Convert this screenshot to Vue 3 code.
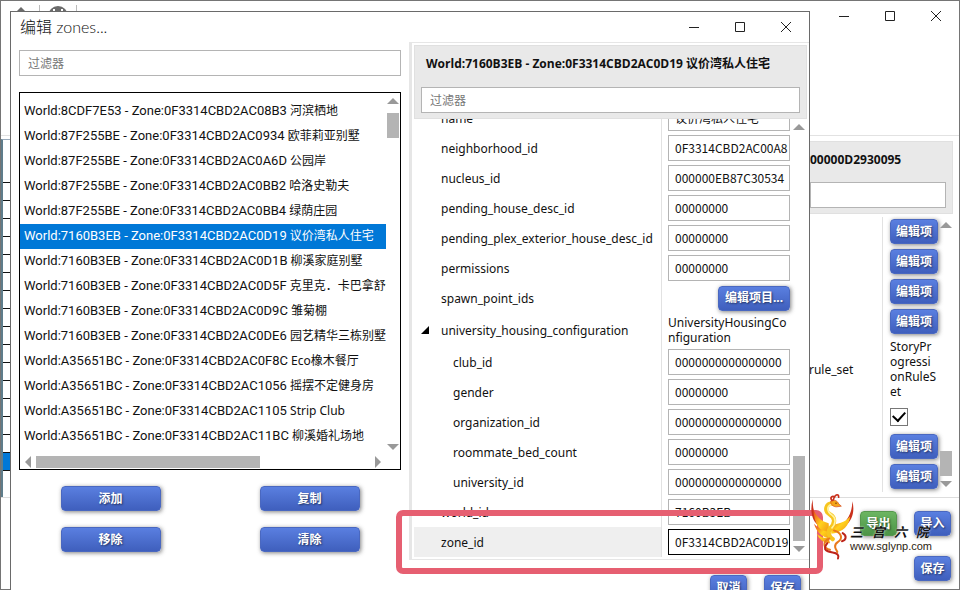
<template>
  <div class="desktop">
    <main class="window">
      <header class="window-bar">
        <div class="toolbar">
          <svg class="tool-icon" viewBox="0 0 24 24"><path d="M12 2l8 8h-4v9H8v-9H4z" /></svg>
          <i class="tool-line"></i>
          <svg class="tool-icon" viewBox="0 0 24 24">
            <circle cx="12" cy="11" r="10" />
            <path class="tool-cut" d="M8 4v8M16 4v8M8 9h8" />
          </svg>
          <i class="tool-line"></i>
        </div>
        <div class="controls">
          <button v-for="c in controls" :key="c.name" :aria-label="c.name">
            <svg viewBox="0 0 12 12"><path :d="c.path" /></svg>
          </button>
        </div>
      </header>

      <section class="workspace">
        <ul class="tree">
          <li v-for="n in 17" :key="n" :class="{ first: n === 1, picked: n === 17 }"></li>
        </ul>
        <div class="details">
          <div class="panel-head">
            <h2>00000D2930095</h2>
            <input type="text" aria-label="details filter" />
          </div>
          <div class="details-body">
            <div class="details-rows">
              <div v-for="(row, i) in backRows" :key="i" class="details-row">
                <span class="details-label">{{ row.label }}</span>
                <div class="details-value">
                  <button v-if="row.type === 'button'" class="btn btn-narrow">编辑项</button>
                  <input v-else-if="row.type === 'check'" type="checkbox" class="check" aria-label="enabled" checked />
                  <span v-else class="break-text">{{ row.value }}</span>
                </div>
              </div>
            </div>
            <div class="scroll-y low">
              <i class="arrow up"></i>
              <i class="thumb short"></i>
              <i class="arrow down"></i>
            </div>
          </div>
        </div>
      </section>

      <footer class="window-footer">
        <button class="btn btn-green">导出</button>
        <button class="btn">导入</button>
        <button class="btn last">保存</button>
      </footer>
    </main>

    <section class="dialog" role="dialog" aria-labelledby="dialog-title">
      <header class="dialog-bar">
        <h1 id="dialog-title">编辑 zones...</h1>
        <div class="controls">
          <button v-for="c in controls" :key="c.name" :aria-label="c.name">
            <svg viewBox="0 0 12 12"><path :d="c.path" /></svg>
          </button>
        </div>
      </header>

      <div class="dialog-body">
        <div class="zones">
          <input v-model="zoneFilter" class="filter" type="text" placeholder="过滤器" aria-label="过滤器" />
          <div class="list-box">
            <div class="list-main">
              <ul class="zone-list">
                <li
                  v-for="zone in zones"
                  :key="zone.id"
                  :class="{ selected: zone.id === selected.id }"
                  @click="selected = zone"
                ><span class="zone-key">{{ zone.id }}</span> {{ zone.name }}</li>
              </ul>
              <div class="scroll-y">
                <i class="arrow up"></i>
                <i class="thumb short"></i>
                <i class="arrow down"></i>
              </div>
            </div>
            <div class="scroll-x">
              <i class="arrow left"></i>
              <i class="thumb"></i>
              <i class="arrow right"></i>
            </div>
          </div>
          <div class="actions">
            <button v-for="a in actions" :key="a" class="btn">{{ a }}</button>
          </div>
        </div>

        <div class="props">
          <div class="panel-head">
            <h2>{{ selected.id }} {{ selected.name }}</h2>
            <input v-model="propFilter" class="filter" type="text" placeholder="过滤器" aria-label="过滤器" />
          </div>
          <div class="props-body">
            <div class="props-rows">
              <div
                v-for="p in properties"
                :key="p.name"
                class="prop"
                :class="{ group: p.type === 'group', child: p.child, active: p.name === 'zone_id' }"
              >
                <label :for="p.name">
                  <svg v-if="p.type === 'group'" class="expander" viewBox="0 0 8 8"><path d="M8 0v8H0z" /></svg>
                  {{ p.name }}
                </label>
                <div class="prop-value">
                  <button v-if="p.type === 'button'" :id="p.name" class="btn btn-wide">编辑项目...</button>
                  <span v-else-if="p.type === 'group'" :id="p.name" class="break-text">{{ p.value }}</span>
                  <input v-else :id="p.name" v-model="p.value" type="text" />
                </div>
              </div>
            </div>
            <div class="scroll-y low">
              <i class="arrow up"></i>
              <i class="thumb"></i>
              <i class="arrow down"></i>
            </div>
          </div>
        </div>
      </div>

      <footer class="dialog-footer">
        <button class="btn">取消</button>
        <button class="btn">保存</button>
      </footer>
    </section>

    <div class="highlight"></div>

    <div class="brand">
      <svg class="phoenix" viewBox="0 0 135 200">
        <defs>
          <linearGradient id="fire" x1="0" y1="0" x2="1" y2="1">
            <stop offset="0" stop-color="#e8431a" />
            <stop offset="0.5" stop-color="#ffd21c" />
            <stop offset="1" stop-color="#f08a14" />
          </linearGradient>
        </defs>
        <path fill="#c9301c" d="M8 18C0 50 4 78 22 94l18 6C18 80 8 56 8 18z" />
        <path fill="#c9301c" d="M127 24c8 30 0 58-20 72l-22 8c26-18 42-44 42-80z" />
        <path fill="url(#fire)" d="M10 48c8 20 22 36 46 42l2 38C34 118 12 96 10 48z" />
        <path fill="url(#fire)" d="M62 96c20-4 42-6 58-26-2 28-20 46-56 52z" />
        <path fill="url(#fire)" d="M12 92c14 14 26 22 44 24l2 20c-22-4-38-18-46-44zM20 122c12 10 24 14 36 12l4 16c-18 0-32-10-40-28z" />
        <path fill="none" stroke="#f7c51e" stroke-width="13" stroke-linecap="round" d="M72 32c-26-4-30 22-12 32s14 28 2 40-4 28 6 34" />
        <path fill="none" stroke="#fff3a0" stroke-width="5" stroke-linecap="round" d="M64 34c-16 6-12 22 2 32s10 28 0 38" />
        <path fill="#f4a51a" stroke="#d5451a" stroke-width="2" d="M62 24c10-6 20-2 24 8l8 7-14 2c-10 0-18-6-18-17z" />
        <path fill="none" stroke="#c9301c" stroke-width="5" stroke-linecap="round" d="M66 22c-8-10 2-16 8-10M70 20c2-14 16-22 16-8" />
        <path fill="none" stroke="#e9791c" stroke-width="6" stroke-linecap="round" d="M58 136c-22 10-18 30 2 34M72 112c22 6 28 24 12 34s-6 24-2 30" />
        <path fill="none" stroke="#bd241a" stroke-width="6" stroke-linecap="round" d="M52 150c-18 22 2 26 16 28s20 8 16 18M98 120c14 8 10 22-2 24" />
        <circle cx="78" cy="30" r="2" fill="#531b08" />
      </svg>
      <div class="brand-text">
        <div class="brand-name"><span v-for="ch in '三宫六院'" :key="ch">{{ ch }}</span></div>
        <div class="brand-url">www.sglynp.com</div>
      </div>
    </div>
  </div>
</template>

<script setup>
import { ref } from 'vue';

const controls = [
  { name: 'minimize', path: 'M1 6.500h10' },
  { name: 'maximize', path: 'M1.500 1.500h9v9h-9z' },
  { name: 'close', path: 'M1 1l10 10M11 1L1 11' },
];

const zones = [
  { id: 'World:8CDF7E53 - Zone:0F3314CBD2AC08B3', name: '河滨栖地' },
  { id: 'World:87F255BE - Zone:0F3314CBD2AC0934', name: '欧菲莉亚别墅' },
  { id: 'World:87F255BE - Zone:0F3314CBD2AC0A6D', name: '公园岸' },
  { id: 'World:87F255BE - Zone:0F3314CBD2AC0BB2', name: '哈洛史勒夫' },
  { id: 'World:87F255BE - Zone:0F3314CBD2AC0BB4', name: '绿荫庄园' },
  { id: 'World:7160B3EB - Zone:0F3314CBD2AC0D19', name: '议价湾私人住宅' },
  { id: 'World:7160B3EB - Zone:0F3314CBD2AC0D1B', name: '柳溪家庭别墅' },
  { id: 'World:7160B3EB - Zone:0F3314CBD2AC0D5F', name: '克里克．卡巴拿舒适' },
  { id: 'World:7160B3EB - Zone:0F3314CBD2AC0D9C', name: '雏菊棚' },
  { id: 'World:7160B3EB - Zone:0F3314CBD2AC0DE6', name: '园艺精华三栋别墅' },
  { id: 'World:A35651BC - Zone:0F3314CBD2AC0F8C', name: 'Eco橡木餐厅' },
  { id: 'World:A35651BC - Zone:0F3314CBD2AC1056', name: '摇摆不定健身房' },
  { id: 'World:A35651BC - Zone:0F3314CBD2AC1105', name: 'Strip Club' },
  { id: 'World:A35651BC - Zone:0F3314CBD2AC11BC', name: '柳溪婚礼场地' },
];

const selected = ref(zones[5]);
const zoneFilter = ref('');
const propFilter = ref('');

const actions = ['添加', '复制', '移除', '清除'];

const properties = ref([
  { name: 'name', value: '议价湾私人住宅' },
  { name: 'neighborhood_id', value: '0F3314CBD2AC00A8' },
  { name: 'nucleus_id', value: '000000EB87C30534' },
  { name: 'pending_house_desc_id', value: '00000000' },
  { name: 'pending_plex_exterior_house_desc_id', value: '00000000' },
  { name: 'permissions', value: '00000000' },
  { name: 'spawn_point_ids', type: 'button' },
  { name: 'university_housing_configuration', type: 'group', value: 'UniversityHousingConfiguration' },
  { name: 'club_id', value: '0000000000000000', child: true },
  { name: 'gender', value: '00000000', child: true },
  { name: 'organization_id', value: '0000000000000000', child: true },
  { name: 'roommate_bed_count', value: '00000000', child: true },
  { name: 'university_id', value: '0000000000000000', child: true },
  { name: 'world_id', value: '7160B3EB' },
  { name: 'zone_id', value: '0F3314CBD2AC0D19' },
]);

const backRows = [
  { type: 'button' },
  { type: 'button' },
  { type: 'button' },
  { type: 'button' },
  { type: 'text', label: 'rule_set', value: 'StoryProgressionRuleSet' },
  { type: 'check' },
  { type: 'button' },
  { type: 'button' },
];
</script>

<style>
html,
body {
  overflow: hidden;
}
</style>

<style scoped>
.desktop {
  position: relative;
  height: 100vh;
  overflow: hidden;
  background: #fff;
  color: #111;
  font-family: "Noto Sans", "Noto Sans CJK SC", sans-serif;
  font-size: 12px;
  line-height: 15px;
}

.desktop * {
  box-sizing: border-box;
}

h1,
h2,
ul {
  margin: 0;
  padding: 0;
  list-style: none;
}

input,
button {
  font: inherit;
  color: inherit;
}

input[type='text'] {
  width: 100%;
  height: 26px;
  padding: 0 0 2px 6px;
  border: 1px solid #b4b4b4;
  border-radius: 0;
  background: #fff;
  font-family: "Noto Sans CJK SC", sans-serif;
  outline: none;
}

input.filter[type='text'] {
  padding: 0 8px 2px;
}

input::placeholder {
  color: #777;
  opacity: 1;
}

.window {
  display: flex;
  flex-direction: column;
  height: 100%;
  border: 1px solid #757575;
}

.window-bar {
  display: flex;
  justify-content: space-between;
  height: 134px;
}

.toolbar {
  display: flex;
  gap: 6px;
  padding: 4px 8px;
}

.tool-icon {
  width: 24px;
  height: 24px;
  fill: #6b6b6b;
}

.tool-cut {
  fill: none;
  stroke: #fff;
  stroke-width: 2;
}

.tool-line {
  width: 1px;
  height: 24px;
  background: #bbb;
}

.controls {
  display: flex;
}

.controls button {
  display: flex;
  align-items: center;
  justify-content: center;
  width: 46px;
  height: 30px;
  padding: 0;
  border: 0;
  background: none;
}

.controls svg {
  width: 12px;
  height: 12px;
  fill: none;
  stroke: #222;
}

.workspace {
  display: flex;
  flex: 1;
  justify-content: space-between;
  min-height: 0;
  border-top: 1px solid #e2e2e2;
  border-bottom: 1px solid #ddd;
}

.tree {
  width: 40%;
  margin-top: 3px;
  border-top: 1px solid #9ab;
  border-left: 2px solid #5f7d8b;
}

.tree li {
  height: 18px;
  border-bottom: 1px solid #111;
}

.tree li.first {
  height: 43px;
}

.tree li.picked {
  background: #0078d7;
}

.details {
  display: flex;
  flex-direction: column;
  width: 144px;
  margin-right: 6px;
  padding-top: 5px;
}

.panel-head {
  display: flex;
  flex-direction: column;
  justify-content: space-between;
  height: 74px;
  padding: 10px 6px 5px;
  border: 1px solid #e0e0e0;
  background: #e9e9e9;
}

.panel-head h2 {
  font-family: "Open Sans", "Noto Sans CJK SC", sans-serif;
  font-size: 12px;
  font-weight: 700;
  line-height: 15px;
  white-space: nowrap;
}

.details .panel-head {
  padding-left: 0;
}

.details-body {
  display: flex;
  flex: 1;
  padding: 3px 0 5px;
}

.details-rows {
  flex: 1;
}

.details-row {
  display: flex;
  align-items: center;
  min-height: 30px;
}

.details-label {
  flex: 1;
}

.details-value {
  display: flex;
  align-items: center;
  align-self: stretch;
  width: 57px;
  padding: 2px 3px 3px 7px;
  border-left: 1px solid #e2e2e2;
}

.break-text {
  word-break: break-all;
}

.check {
  appearance: none;
  display: grid;
  place-items: center;
  width: 18px;
  height: 18px;
  margin: 0;
  border: 1px solid #777;
  background: #fff;
}

.check:checked::after {
  content: '';
  width: 6px;
  height: 10px;
  margin-bottom: 3px;
  border: solid #000;
  border-width: 0 2px 2px 0;
  transform: rotate(42deg);
}

.btn {
  flex: none;
  width: 37px;
  height: 25px;
  padding: 0;
  overflow: hidden;
  border: 1px solid #4a68c0;
  border-radius: 4px;
  background: linear-gradient(#5a7fe0, #3f5fbd);
  box-shadow: 1px 1px 4px #444a;
  color: #fff;
  font-weight: 700;
  line-height: 20px;
  text-shadow: 1px 1px 2px #0008;
  white-space: nowrap;
}

.btn-narrow {
  width: 48px;
}

.btn-wide {
  width: 72px;
  margin-left: auto;
}

.btn-green {
  border-color: #56984e;
  background: linear-gradient(#6cb562, #4c9447);
}

.window-footer {
  display: grid;
  grid-template-columns: 37px 37px;
  gap: 20px 17px;
  justify-content: end;
  align-content: start;
  height: 91px;
  padding: 13px 8px;
}

.window-footer .last {
  grid-column: 2;
}

.dialog {
  position: absolute;
  top: 11px;
  right: 150px;
  bottom: -16px;
  left: 10px;
  display: flex;
  flex-direction: column;
  border: 1px solid #6a6a6a;
  background: #fff;
}

.dialog-bar {
  display: flex;
  align-items: center;
  justify-content: space-between;
  height: 30px;
  padding-left: 9px;
}

.dialog-bar h1 {
  font-family: Lato, "Noto Sans CJK SC", sans-serif;
  font-size: 16px;
  font-weight: 300;
  line-height: 20px;
}

.dialog-body {
  display: grid;
  grid-template-columns: calc(50% - 1px) 1fr;
  flex: 1;
  min-height: 0;
}

.zones {
  display: flex;
  flex-direction: column;
  min-width: 0;
  min-height: 0;
  padding: 8px;
}

.list-box {
  display: flex;
  flex: 1;
  flex-direction: column;
  min-height: 0;
  margin: 16px 0;
  border: 1px solid #000;
}

.list-main {
  display: flex;
  flex: 1;
  min-height: 0;
}

.zone-list {
  flex: 1;
  min-width: 0;
  padding-top: 6px;
  overflow: hidden;
}

.zone-list li {
  height: 25px;
  padding-left: 4px;
  overflow: hidden;
  line-height: 24px;
  white-space: nowrap;
}

.zone-list li.selected {
  background: #0078d7;
  color: #fff;
}

.zone-key {
  font-family: Roboto, sans-serif;
  font-size: 13px;
}

.scroll-y {
  display: flex;
  flex-direction: column;
  align-items: center;
  gap: 9px;
  width: 14px;
  padding: 5px 1px;
}

.scroll-y .thumb {
  width: 12px;
  height: 85px;
  background: #b4b4b4;
}

.scroll-y .thumb.short {
  height: 25px;
}

.scroll-y .down {
  margin-top: auto;
}

.scroll-y.low {
  gap: 5px;
}

.scroll-y.low .thumb {
  margin-top: auto;
}

.scroll-y.low .down {
  margin-top: 0;
}

.scroll-x {
  display: flex;
  align-items: center;
  gap: 5px;
  height: 14px;
  margin-right: 14px;
  padding: 0 5px;
}

.scroll-x .thumb {
  width: 63%;
  height: 12px;
  background: #b4b4b4;
}

.scroll-x .right {
  margin-left: auto;
}

.arrow {
  width: 12px;
  height: 6px;
  background: #999;
}

.arrow.up {
  clip-path: polygon(50% 0, 100% 100%, 0 100%);
}

.arrow.down {
  clip-path: polygon(0 0, 100% 0, 50% 100%);
}

.arrow.left,
.arrow.right {
  width: 6px;
  height: 12px;
}

.arrow.left {
  clip-path: polygon(100% 0, 100% 100%, 0 50%);
}

.arrow.right {
  clip-path: polygon(0 0, 100% 50%, 0 100%);
}

.actions {
  display: grid;
  grid-template-columns: 1fr 1fr;
  gap: 16px 0;
  justify-items: center;
  margin: 0 -8px;
}

.actions .btn {
  width: 100px;
}

.props {
  display: flex;
  flex-direction: column;
  min-width: 0;
  min-height: 0;
  padding: 2px;
  border: solid #e6e6e6;
  border-width: 1px 0 1px 3px;
}

.props .panel-head > h2 {
  padding-left: 5px;
}

.props-body {
  display: flex;
  flex: 1;
  gap: 2px;
  min-height: 0;
  padding-right: 1px;
  overflow: hidden;
}

/* rows are stacked against the bottom edge, the end of the scroll range */
.props-rows {
  display: flex;
  flex: 1;
  flex-direction: column;
  justify-content: flex-end;
  min-width: 0;
}

.prop {
  display: grid;
  grid-template-columns: 1fr 128px;
  flex: none;
  height: 30px;
}

.prop.group {
  height: 34px;
}

.prop label {
  display: flex;
  align-items: center;
  padding-left: 27px;
  border-right: 1px solid #e2e2e2;
  white-space: nowrap;
}

.prop.child label {
  padding-left: 39px;
}

.prop.group label {
  padding-left: 6px;
}

.prop.active label {
  background: #efefef;
}

.prop.active input[type='text'] {
  border-color: #000;
}

.expander {
  width: 8px;
  height: 8px;
  margin: 0 12px 0 1px;
}

.prop-value {
  display: flex;
  align-items: center;
  padding-left: 6px;
}

.dialog-footer {
  display: flex;
  justify-content: flex-end;
  gap: 17px;
  height: 45px;
  padding: 15px 8px;
}

.highlight {
  position: absolute;
  right: 137px;
  bottom: 16px;
  left: 396px;
  height: 64px;
  border: 6px solid #e65f71;
  border-radius: 7px;
}

.brand {
  position: absolute;
  right: 28px;
  bottom: 30px;
  display: flex;
}

.phoenix {
  width: 45px;
  height: 67px;
  margin-right: -5px;
}

.brand-text {
  padding-top: 32px;
  color: #111;
  text-shadow: 0 0 2px #fff;
}

.brand-name {
  display: flex;
  justify-content: space-between;
  padding-right: 3px;
  font-family: "Noto Sans CJK SC", sans-serif;
  font-size: 13px;
  font-style: italic;
  font-weight: 700;
  line-height: 14px;
}

.brand-url {
  color: #2b2410;
  font-family: "Liberation Sans", sans-serif;
  font-size: 11px;
  line-height: 14px;
}
</style>
